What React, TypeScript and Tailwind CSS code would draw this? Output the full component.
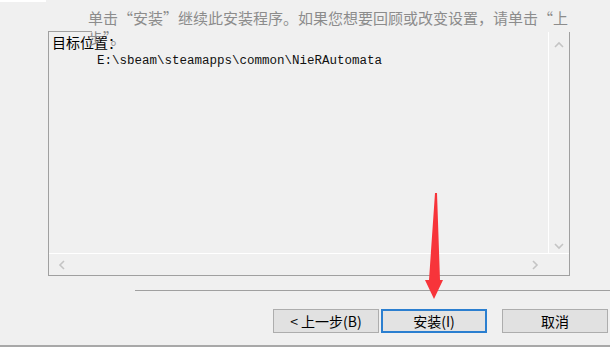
import React from "react";

const cjk = { fontFamily: '"Noto Sans CJK SC", "Noto Sans", sans-serif' };
const mono = { fontFamily: '"Liberation Mono", "Noto Sans CJK SC", monospace' };

function Chevron({ dir }: { dir: "up" | "down" | "left" | "right" }) {
  const pts = {
    up: "1,6 5,2 9,6",
    down: "1,2 5,6 9,2",
    left: "6,1 2,5 6,9",
    right: "2,1 6,5 2,9",
  }[dir];
  const vertical = dir === "up" || dir === "down";
  return (
    <svg width={vertical ? 10 : 8} height={vertical ? 8 : 10} viewBox={vertical ? "0 0 10 8" : "0 0 8 10"}>
      <polyline points={pts} fill="none" stroke="#c4c4c4" strokeWidth="1.6" />
    </svg>
  );
}

function Button({ children, primary }: { children: React.ReactNode; primary?: boolean }) {
  return (
    <div
      className={
        "flex h-[24px] w-[106px] items-center justify-center text-[14px] text-black " +
        (primary ? "border-2 border-[#2b7fd0] bg-[#e3e3e3]" : "border border-[#adadad] bg-[#e1e1e1]")
      }
      style={cjk}
    >
      {children}
    </div>
  );
}

export default function App() {
  return (
    <div className="relative h-[347px] w-[610px] overflow-hidden bg-[#f0f0f0]">
      <div className="h-[2px] w-[46px] bg-white" />
      {/* Instruction */}
      <div className="pl-[88px] pt-[5px] text-[15px] leading-[21px] text-[#8c8c8c] whitespace-nowrap" style={cjk}>
        <div>单击“安装”继续此安装程序。如果您想要回顾或改变设置，请单击“上</div>
        <div className="relative z-10 -mt-[1px]">步”。</div>
      </div>

      {/* Destination box */}
      <div className="relative -mt-[16px] ml-[48px] flex h-[244px] w-[522px] flex-col border-x border-b border-[#a0a0a0]">
        <div className="absolute -top-px left-[-1px] h-px w-[44px] bg-[#a0a0a0]" />
        <div className="flex flex-1 min-h-0">
          <div className="flex-1 pl-[3px] pt-[2px]">
            <div className="text-[14px] leading-[16px] text-black" style={cjk}>
              目标位置：
            </div>
            <div className="pl-[45px] pt-[4px] text-[12.5px] leading-[14px] text-[#111]" style={mono}>
              E:\sbeam\steamapps\common\NieRAutomata
            </div>
          </div>
          <div className="flex w-[21px] flex-col items-center justify-between border-l border-white pb-[3px] pt-[9px]">
            <Chevron dir="up" />
            <Chevron dir="down" />
          </div>
        </div>
        <div className="flex h-[22px] items-center justify-between border-t border-white pl-[9px] pr-[30px]">
          <Chevron dir="left" />
          <Chevron dir="right" />
        </div>
      </div>

      {/* Separator */}
      <div className="ml-[135px] mt-[14px] h-px bg-[#a0a0a0]" />

      {/* Buttons */}
      <div className="mt-[18px] flex pl-[273px]">
        <Button>&lt; 上一步(B)</Button>
        <div className="w-[2px]" />
        <Button primary>安装(I)</Button>
        <div className="w-[15px]" />
        <Button>取消</Button>
      </div>

      <div className="absolute bottom-0 left-0 h-[2px] w-full bg-[#a8a8a8]" />

      {/* Red arrow */}
      <svg className="pointer-events-none absolute left-0 top-0" width="610" height="347">
        <polygon
          points="435,193 437,193 440,280 443,280 434,299 425,280 429,280"
          fill="#f7343a"
        />
      </svg>
    </div>
  );
}
